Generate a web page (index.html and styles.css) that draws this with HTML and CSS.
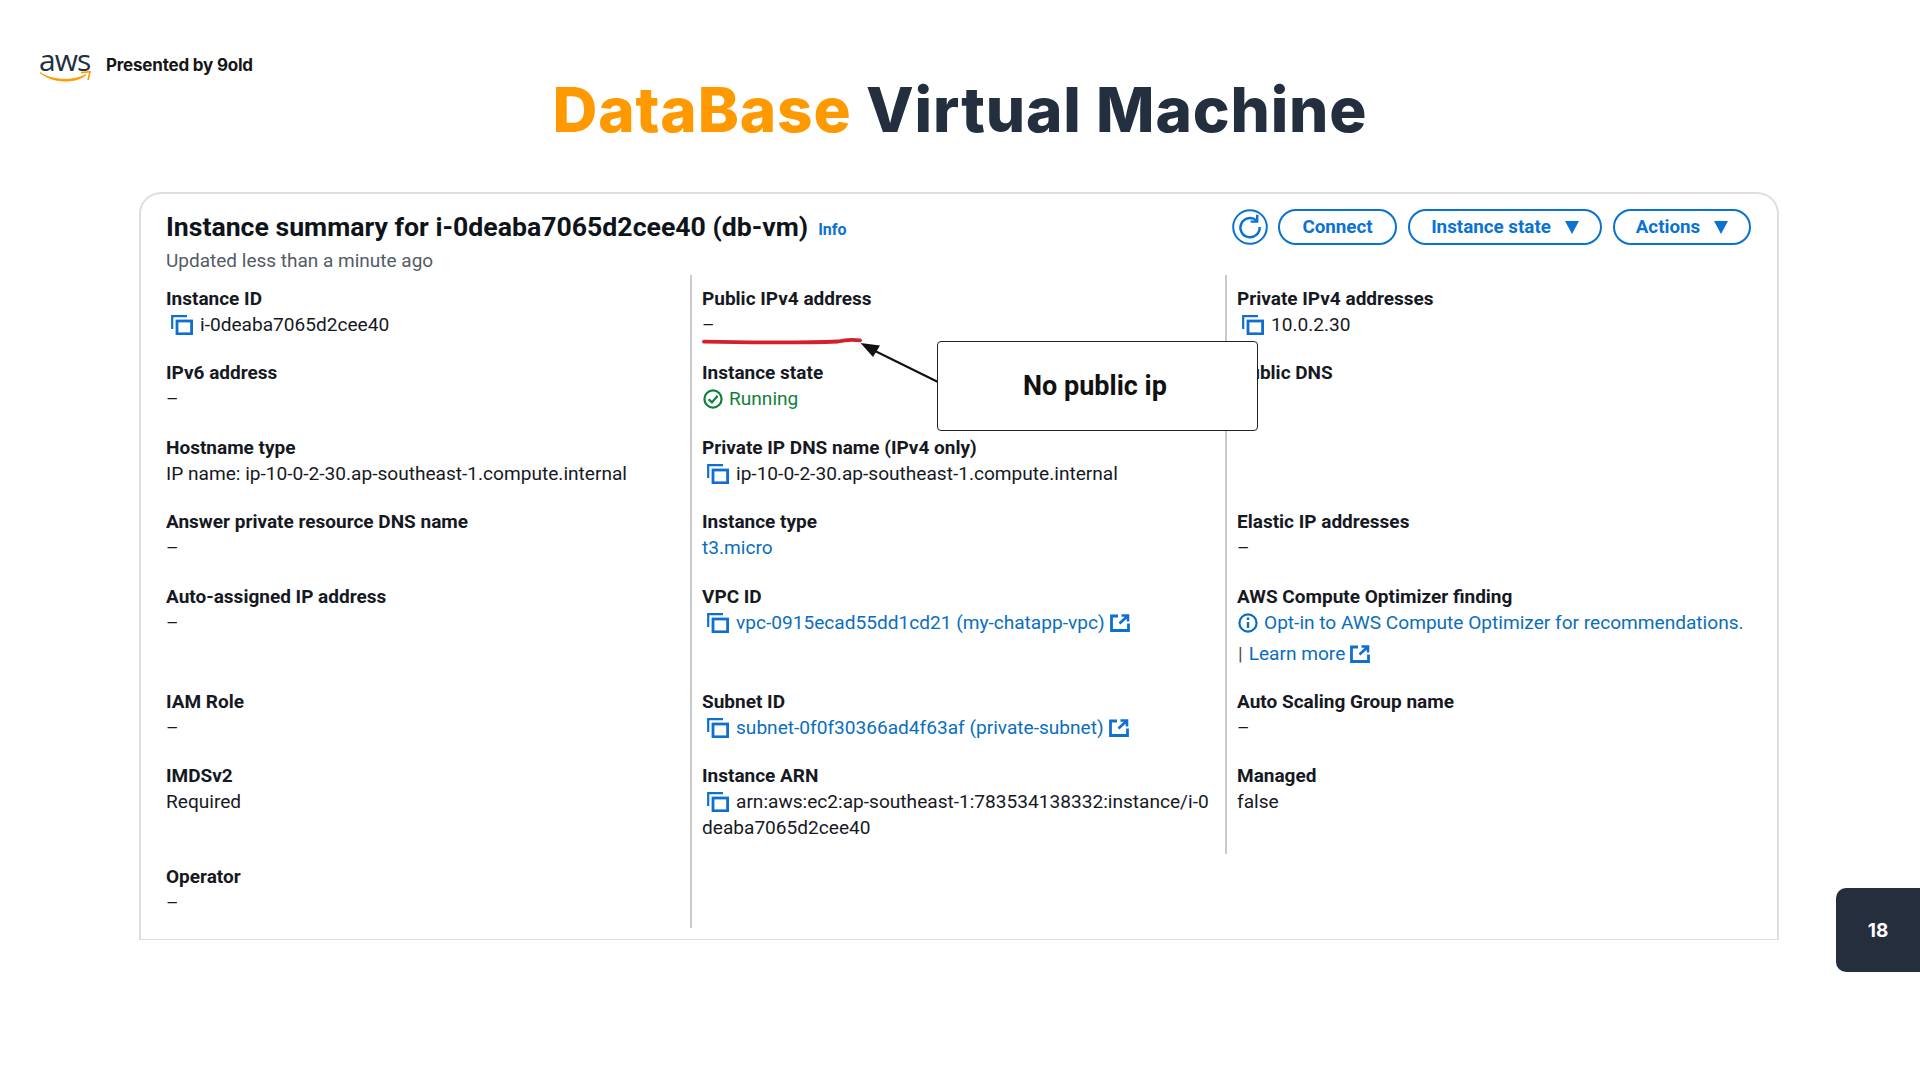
FILE: index.html
```html
<!DOCTYPE html>
<html lang="en">
<head>
<meta charset="utf-8">
<title>DataBase Virtual Machine</title>
<link rel="stylesheet" href="styles.css">
</head>
<body>
<svg class="defs" width="0" height="0" aria-hidden="true">
  <defs>
    <symbol id="copy" viewBox="0 0 22 20">
      <path d="M1.2 14V1.2H16" fill="none" stroke="currentColor" stroke-width="2.2"/>
      <rect x="6" y="6" width="14.6" height="12.8" fill="none" stroke="currentColor" stroke-width="2.8"/>
    </symbol>
    <symbol id="ext" viewBox="0 0 20 18">
      <path d="M8 2H1.5V16.5H18.5V9.5" fill="none" stroke="currentColor" stroke-width="2.8"/>
      <path d="M9.5 9.5L17 2.5M11.5 1.5H18V7.5" fill="none" stroke="currentColor" stroke-width="2.6"/>
    </symbol>
  </defs>
</svg>
<main class="slide">
  <header class="brand">
    <div class="logo">
      <span class="logo-word">aws</span>
      <svg class="logo-smile" viewBox="0 0 52 12" aria-hidden="true">
        <path d="M1 1.5C12 9.5 34 11 47 3.5C40 11.5 15 13.5 1 1.5Z" fill="#f90" stroke="#f90" stroke-width="1"/>
        <path d="M42 1.6L51 .8L49 9" fill="none" stroke="#f90" stroke-width="1.6"/>
      </svg>
    </div>
    <span class="presenter">Presented by 9old</span>
  </header>
  <h1 class="title"><span class="accent">DataBase</span> Virtual Machine</h1>

  <section class="card">
    <div class="card-head">
      <div class="heading-line">
        <h2 class="card-title">Instance summary for i-0deaba7065d2cee40 (db-vm)</h2>
        <a class="info">Info</a>
      </div>
      <div class="actions">
        <button class="btn round" aria-label="Refresh">
          <svg viewBox="0 0 36 36" width="36" height="36" aria-hidden="true">
            <circle cx="18" cy="18" r="16.8" fill="none" stroke="currentColor" stroke-width="2"/>
            <path d="M24.5 11.6A9.6 9.6 0 1 0 27.6 18" fill="none" stroke="currentColor" stroke-width="2.4"/>
            <path d="M25.2 5.8V12.6H18.6" fill="none" stroke="currentColor" stroke-width="2.4"/>
          </svg>
        </button>
        <button class="btn connect">Connect</button>
        <button class="btn state">Instance state<span class="caret"></span></button>
        <button class="btn menu">Actions<span class="caret"></span></button>
      </div>
    </div>
    <p class="updated">Updated less than a minute ago</p>

    <div class="grid">
      <div class="cell"><div class="label">Instance ID</div><div class="value"><svg class="copy"><use href="#copy"/></svg>i-0deaba7065d2cee40</div></div>
      <div class="cell rule"><div class="label">Public IPv4 address</div><div class="value">–</div></div>
      <div class="cell rule"><div class="label">Private IPv4 addresses</div><div class="value"><svg class="copy"><use href="#copy"/></svg>10.0.2.30</div></div>

      <div class="cell"><div class="label">IPv6 address</div><div class="value">–</div></div>
      <div class="cell rule"><div class="label">Instance state</div><div class="value ok">
        <svg class="status" viewBox="0 0 22 20" aria-hidden="true"><circle cx="11" cy="10" r="8.6" fill="none" stroke="currentColor" stroke-width="2.2"/><path d="M6.6 10.2L10 13.4L15.6 6.8" fill="none" stroke="currentColor" stroke-width="2.2"/></svg>Running</div></div>
      <div class="cell rule"><div class="label">Public DNS</div><div class="value">–</div></div>

      <div class="cell"><div class="label">Hostname type</div><div class="value">IP name: ip-10-0-2-30.ap-southeast-1.compute.internal</div></div>
      <div class="cell rule"><div class="label">Private IP DNS name (IPv4 only)</div><div class="value"><svg class="copy"><use href="#copy"/></svg>ip-10-0-2-30.ap-southeast-1.compute.internal</div></div>
      <div class="cell rule"></div>

      <div class="cell"><div class="label">Answer private resource DNS name</div><div class="value">–</div></div>
      <div class="cell rule"><div class="label">Instance type</div><div class="value link">t3.micro</div></div>
      <div class="cell rule"><div class="label">Elastic IP addresses</div><div class="value">–</div></div>

      <div class="cell"><div class="label">Auto-assigned IP address</div><div class="value">–</div></div>
      <div class="cell rule"><div class="label">VPC ID</div><div class="value link"><svg class="copy"><use href="#copy"/></svg>vpc-0915ecad55dd1cd21 (my-chatapp-vpc)<svg class="ext"><use href="#ext"/></svg></div></div>
      <div class="cell rule"><div class="label">AWS Compute Optimizer finding</div><div class="value link">
        <svg class="status" viewBox="0 0 22 20" aria-hidden="true"><circle cx="11" cy="10" r="8.6" fill="none" stroke="currentColor" stroke-width="2.2"/><path d="M11 9V15M11 4.6V7" fill="none" stroke="currentColor" stroke-width="2.4"/></svg>Opt-in to AWS Compute Optimizer for recommendations.</div>
        <div class="value more"><span class="pipe">|</span><span class="link">Learn more<svg class="ext"><use href="#ext"/></svg></span></div></div>

      <div class="cell"><div class="label">IAM Role</div><div class="value">–</div></div>
      <div class="cell rule"><div class="label">Subnet ID</div><div class="value link"><svg class="copy"><use href="#copy"/></svg>subnet-0f0f30366ad4f63af (private-subnet)<svg class="ext"><use href="#ext"/></svg></div></div>
      <div class="cell rule"><div class="label">Auto Scaling Group name</div><div class="value">–</div></div>

      <div class="cell"><div class="label">IMDSv2</div><div class="value">Required</div></div>
      <div class="cell rule"><div class="label">Instance ARN</div><div class="value"><svg class="copy"><use href="#copy"/></svg>arn:aws:ec2:ap-southeast-1:783534138332:instance/i-0<br>deaba7065d2cee40</div></div>
      <div class="cell rule short"><div class="label">Managed</div><div class="value">false</div></div>

      <div class="cell last"><div class="label">Operator</div><div class="value">–</div></div>
      <div class="cell rule last"></div>
    </div>
  </section>

  <svg class="annotation" viewBox="0 0 1920 1080" aria-hidden="true">
    <path d="M704 341.6C750 342.5 800 343 838 341.5C846 339.5 852 339.3 860 340.4" fill="none" stroke="#d4202c" stroke-width="3.8" stroke-linecap="round"/>
    <path d="M938 382L872 349.5" fill="none" stroke="#111" stroke-width="2"/>
    <path d="M860.5 343L880 345.5L873 357Z" fill="#111"/>
  </svg>
  <div class="callout">No public ip</div>
  <div class="page-badge">18</div>
</main>
</body>
</html>
```
FILE: styles.css
```css
* { box-sizing: border-box; }
html, body { margin: 0; background: #fff; }
.defs { position: absolute; }
.slide {
  position: relative;
  width: 1920px;
  height: 1080px;
  overflow: hidden;
  padding-top: 49px;
  background: #fff;
  font-family: Roboto, "Liberation Sans", sans-serif;
}
.brand {
  display: flex;
  align-items: flex-start;
  gap: 15px;
  height: 35px;
  padding-left: 39px;
}
.logo { width: 52px; height: 35px; }
.logo-word {
  display: block;
  font-family: "Open Sans", sans-serif;
  font-size: 30px;
  line-height: 22px;
  color: #232f3e;
  letter-spacing: -1px;
}
.logo-smile { display: block; width: 52px; height: 12px; margin-top: 0; }
.presenter {
  font-family: Inter, sans-serif;
  font-weight: 700;
  font-size: 17px;
  line-height: 32px;
  color: #161616;
  letter-spacing: -.2px;
}
.title {
  margin: -10px 0 46px;
  text-align: center;
  font-family: Inter, sans-serif;
  font-weight: 800;
  font-size: 62px;
  line-height: 72px;
  color: #232f3e;
  letter-spacing: .85px;
}
.accent { color: #ff9900; }

.card {
  width: 1640px;
  height: 748px;
  margin-left: 139px;
  padding: 15px 26px 0 25px;
  border: 2px solid #dcdedf;
  border-bottom-width: 1px;
  border-radius: 22px 22px 0 0;
  color: #16191f;
}
.card-head { display: flex; align-items: center; justify-content: space-between; height: 36px; }
.heading-line { display: flex; align-items: center; gap: 10px; }
.card-title { margin: 0; font-size: 26.65px; font-weight: 700; line-height: 36px; color: #0f141a; }
.info { font-size: 16px; font-weight: 700; color: #0972d3; padding-top: 5px; }
.actions { display: flex; gap: 11px; }
.btn {
  display: flex;
  align-items: center;
  justify-content: center;
  height: 36px;
  padding: 0;
  border: 2px solid #0972d3;
  border-radius: 18px;
  background: #fff;
  color: #0972d3;
  font: 700 18.8px/1 Roboto, sans-serif;
}
.round { width: 36px; border: 0; margin-right: -1px; }
.connect { width: 119px; }
.state { width: 194px; }
.menu { width: 138px; }
.caret {
  width: 0;
  height: 0;
  margin-left: 14px;
  border-left: 7.5px solid transparent;
  border-right: 7.5px solid transparent;
  border-top: 13px solid currentColor;
}
.updated { margin: 0; height: 30px; padding-top: 4px; font-size: 19px; line-height: 24px; color: #545b64; }

.grid {
  display: grid;
  grid-template-columns: 524px 535px 1fr;
  grid-auto-rows: auto;
}
.cell { padding: 0 0 21.4px; }
.grid > .cell:nth-child(-n+3) { padding-top: 10px; }
.rule { border-left: 2px solid #c8cacc; padding-left: 10px; }
.short { margin-bottom: 9px; padding-bottom: 12.4px; }
.last { padding-bottom: 12px; }
.label { font-size: 19px; font-weight: 700; line-height: 27px; color: #16191f; }
.value { font-size: 19.1px; line-height: 26px; color: #16191f; white-space: nowrap; }
.link { color: #0a6ebd; }
.ok { color: #12803c; }
.more { margin-top: 5px; }
.pipe { color: #5b4a33; margin-right: 6px; margin-left: 1px; }
.copy { display: inline-block; width: 22px; height: 20px; margin: 0 7px 0 5px; vertical-align: -4px; color: #0f6fcf; }
.ext { display: inline-block; width: 20px; height: 18px; margin-left: 5px; vertical-align: -3px; color: #0f6fcf; }
.status { display: inline-block; width: 22px; height: 20px; margin-right: 5px; vertical-align: -4px; }

.annotation { position: absolute; left: 0; top: 0; width: 1920px; height: 1080px; pointer-events: none; }
.callout {
  position: absolute;
  left: 937px;
  top: 341px;
  width: 321px;
  height: 90px;
  display: flex;
  align-items: center;
  justify-content: center;
  padding-right: 5px;
  border: 1.5px solid #222;
  border-radius: 4px;
  background: #fff;
  font-size: 27px;
  font-weight: 700;
  color: #111;
}
.page-badge {
  position: absolute;
  left: 1836px;
  top: 888px;
  width: 84px;
  height: 84px;
  display: flex;
  align-items: center;
  justify-content: center;
  border-radius: 10px 0 0 10px;
  background: #252e3d;
  font-family: Inter, sans-serif;
  font-weight: 700;
  font-size: 19px;
  color: #fff;
}
```
